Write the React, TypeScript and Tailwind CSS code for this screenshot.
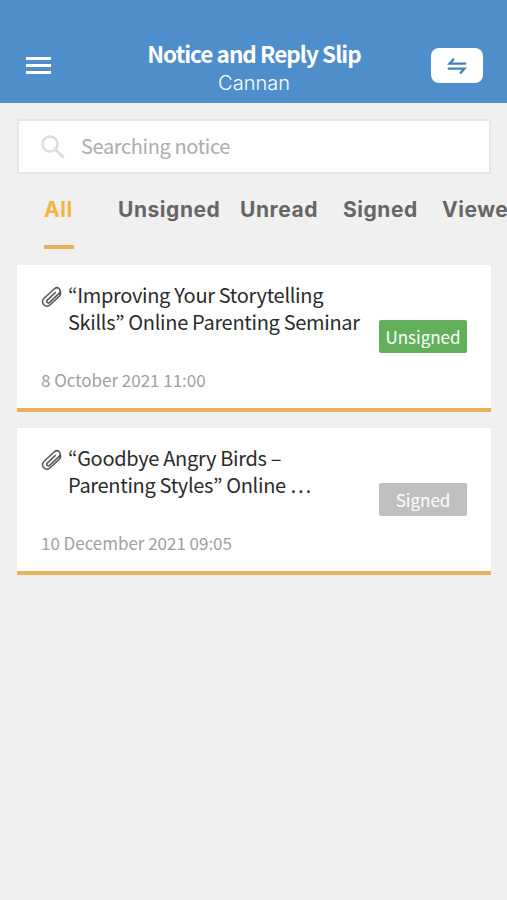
import { FC, useState } from "react";

interface Notice {
  id: number;
  lines: string[];
  date: string;
  signed: boolean;
}

interface Tab {
  label: string;
  className: string;
}

const tabs: Tab[] = [
  { label: "All", className: "ml-[44px] w-[74px]" },
  { label: "Unsigned", className: "w-[122px]" },
  { label: "Unread", className: "w-[103px]" },
  { label: "Signed", className: "w-[99px]" },
  { label: "Viewed", className: "w-[99px]" },
];

const notices: Notice[] = [
  {
    id: 1,
    lines: ["“Improving Your Storytelling", "Skills” Online Parenting Seminar"],
    date: "8 October 2021 11:00",
    signed: false,
  },
  {
    id: 2,
    lines: ["“Goodbye Angry Birds –", "Parenting Styles” Online …"],
    date: "10 December 2021 09:05",
    signed: true,
  },
];

const PaperClip: FC = () => (
  <svg
    viewBox="0 0 22 22"
    className="mt-[21px] h-[22px] w-[22px] shrink-0"
    fill="none"
    stroke="#555555"
    strokeWidth="1.5"
    strokeLinecap="round"
    strokeLinejoin="round"
  >
    <path d="M14.2 6.6 6.3 14.1c-1.6 1.7.6 3.9 2.3 2.3l9.3-8.8c3.3-3.2-1-8-4.5-4.8L3.1 12.2c-4.7 4.6 1.7 10.6 6.4 6.3l8.8-8.3c1.5-1.5 1.6-3.2.9-4.6" />
  </svg>
);

const Header: FC = () => (
  <header className="flex h-[103px] items-start justify-between bg-[#4d8ecb] pr-6 pl-[26px] text-white">
    <button aria-label="Menu" className="mt-[57px] flex w-[51px] flex-col gap-1">
      <span className="h-[3px] w-[25px] bg-white"></span>
      <span className="h-[3px] w-[25px] bg-white"></span>
      <span className="h-[3px] w-[25px] bg-white"></span>
    </button>
    <div className="mt-[39px] text-center">
      <h1 className="text-[22.5px] leading-[29px] font-bold tracking-[-0.95px] whitespace-nowrap">
        Notice and Reply Slip
      </h1>
      <p className="mt-0.5 font-['Inter',sans-serif] text-[20px] leading-[26px] font-light">
        Cannan
      </p>
    </div>
    <button
      aria-label="Switch"
      className="mt-12 flex h-[35px] w-[52px] items-center justify-center rounded-lg bg-white"
    >
      <svg
        viewBox="0 0 20 18"
        className="h-[18px] w-5"
        fill="none"
        stroke="#4780b8"
        strokeWidth="2.3"
      >
        <path d="M19.2 6.7H2.6L7 1.7" />
        <path d="M.8 11.7h16.6L13 16.5" />
      </svg>
    </button>
  </header>
);

const NoticeCard: FC<{ notice: Notice }> = ({ notice }) => (
  <li className="flex h-[147px] items-start border-b-4 border-[#eab058] bg-white px-6">
    <div className="min-w-0 flex-1">
      <div className="flex gap-[5px]">
        <PaperClip />
        <h2 className="mt-4 text-[20px] leading-[27px] tracking-[-0.32px] whitespace-nowrap text-[#2b2b2b]">
          {notice.lines.map((line) => (
            <span key={line} className="block">
              {line}
            </span>
          ))}
        </h2>
      </div>
      <p className="mt-[31px] text-[17px] leading-[27px] tracking-[-0.03px] text-[#a0a0a0]">
        {notice.date}
      </p>
    </div>
    <span
      className={`mt-[55px] flex h-[33px] w-[88px] shrink-0 items-center justify-center rounded-[2px] text-[17px] text-white ${
        notice.signed ? "bg-[#bfbfbf]" : "bg-[#62b15a]"
      }`}
    >
      {notice.signed ? "Signed" : "Unsigned"}
    </span>
  </li>
);

const App: FC = () => {
  const [active, setActive] = useState<string>("All");

  return (
    <div className="min-h-screen w-full overflow-hidden bg-[#f0f0f0] font-['Noto_Sans_CJK_KR','Noto_Sans',sans-serif]">
      <Header />
      <div className="mt-4 mr-4 ml-[17px] flex h-[55px] items-center border-2 border-[#e6e6e6] bg-white pl-[22px]">
        <svg
          viewBox="0 0 24 24"
          className="h-6 w-6 shrink-0"
          fill="none"
          stroke="#dddddd"
          strokeWidth="2.5"
        >
          <circle cx="9" cy="9" r="7.5" />
          <path d="m14.5 14.5 8.3 8.3" strokeWidth="3" />
        </svg>
        <input
          type="text"
          placeholder="Searching notice"
          className="mb-0.5 ml-4 flex-1 text-[20px] tracking-[-0.38px] outline-none placeholder:text-[#acacac]"
        />
      </div>
      <nav className="flex h-[75px] pt-[22px] font-['Inter',sans-serif] text-[21px] leading-7 font-bold tracking-[0.55px]">
        {tabs.map((tab) => (
          <button
            key={tab.label}
            onClick={() => setActive(tab.label)}
            className={`flex shrink-0 flex-col items-start ${tab.className} ${
              active === tab.label ? "text-[#f3b53f]" : "text-[#666666]"
            }`}
          >
            {tab.label}
            {active === tab.label && (
              <span className="mt-[21px] h-1 w-[30px] bg-[#eab058]"></span>
            )}
          </button>
        ))}
      </nav>
      <ul className="mt-4 mr-4 ml-[17px] flex flex-col gap-4">
        {notices.map((notice) => (
          <NoticeCard key={notice.id} notice={notice} />
        ))}
      </ul>
    </div>
  );
};

export default App;
